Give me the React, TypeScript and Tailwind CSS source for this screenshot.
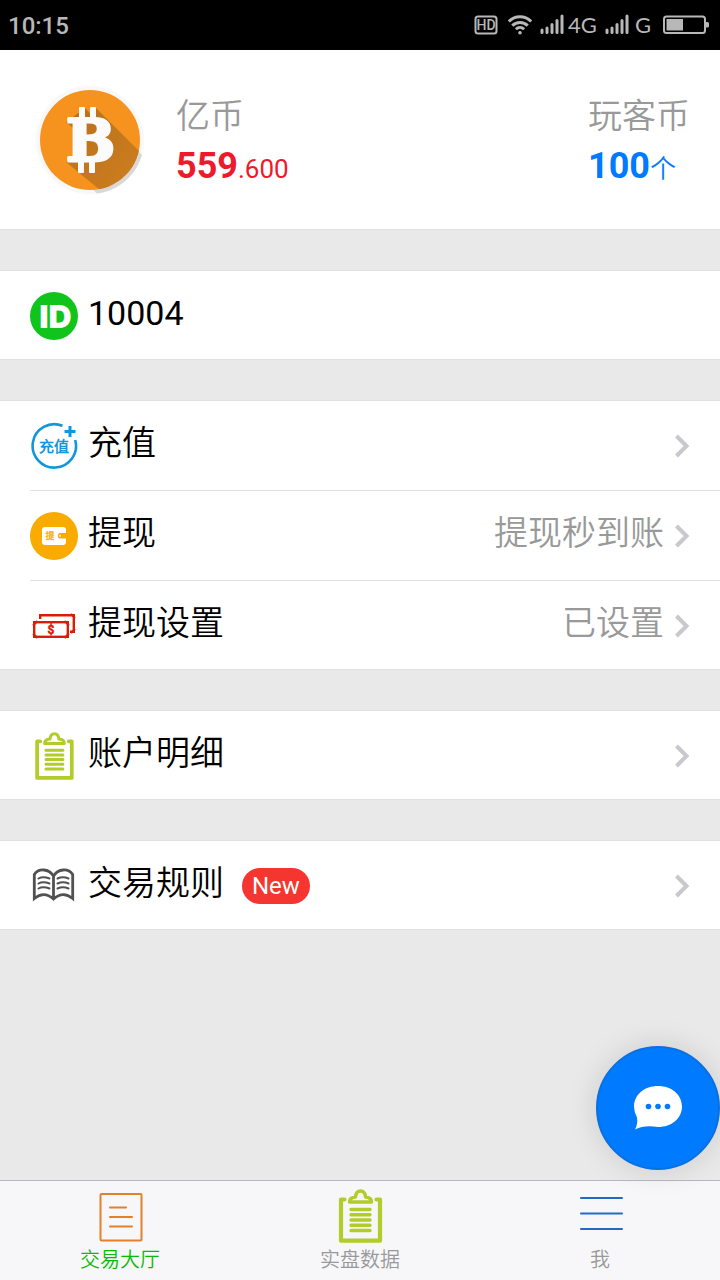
import type { ReactNode } from "react"

function SignalBars() {
  return (
    <svg width="24" height="22" viewBox="0 0 24 22" stroke="#b8b8b8" strokeWidth="3" strokeLinecap="round">
      <path d="M2 16V18.500M7 14V18.500M12 10.500V18.500M17 6.500V18.500M22 2V18.500" />
    </svg>
  )
}

function StatusBar() {
  return (
    <header className="flex h-[50px] items-center justify-between bg-black pl-2 pr-2.5 text-[#b8b8b8]">
      <time className="pt-0.5 text-[24px] font-medium leading-8">10:15</time>
      <div className="flex items-center">
        <svg width="24" height="20" viewBox="0 0 24 20" aria-label="HD">
          <rect x="1.500" y="1.500" width="21" height="17" rx="2.500" fill="none" stroke="#b8b8b8" strokeWidth="2" />
          <text x="12" y="15" fontSize="14" fontWeight="500" textAnchor="middle" fill="#b8b8b8">
            HD
          </text>
        </svg>
        <svg className="ml-2.5" width="24" height="20" viewBox="0 0 24 20" fill="none" stroke="#b8b8b8" strokeWidth="3">
          <path d="M.8 6.500C7 .2 17 .2 23.200 6.500M4.300 10.600C8.500 6.300 15.500 6.300 19.700 10.600M7.900 14.300C10.200 12 13.800 12 16.100 14.300" />
          <circle cx="12" cy="17.800" r="1.800" fill="#b8b8b8" stroke="none" />
        </svg>
        <div className="ml-2 flex items-center gap-1">
          <SignalBars />
          <span className="font-['Lato'] text-[22px] leading-6">4G</span>
        </div>
        <div className="ml-2 flex items-center gap-1.5">
          <SignalBars />
          <span className="font-['Lato'] text-[22px] leading-6">G</span>
        </div>
        <svg className="ml-3" width="47" height="20" viewBox="0 0 47 20">
          <rect x="1" y="1.500" width="41" height="16.500" rx="2.500" fill="none" stroke="#b8b8b8" strokeWidth="2" />
          <path d="M3.500 4H20V15.500H3.500ZM43 7H44.500Q46 7 46 8.500V11Q46 12.500 44.500 12.500H43Z" fill="#b8b8b8" />
        </svg>
      </div>
    </header>
  )
}

function BitcoinLogo() {
  return (
    <svg width="108" height="108" viewBox="0 0 108 108" aria-hidden="true">
      <defs>
        <clipPath id="coin">
          <circle cx="54" cy="54" r="50" />
        </clipPath>
        <clipPath id="rim">
          <circle cx="54" cy="54" r="54" />
        </clipPath>
        <linearGradient id="shade" x1="0" y1="0" x2="1" y2="1">
          <stop offset="0" stopColor="#b8701c" />
          <stop offset="1" stopColor="#d98520" />
        </linearGradient>
      </defs>
      <circle cx="54" cy="54" r="54" fill="#f8f8f8" />
      <path d="M94 57 112 75V112H65L52 98Z" fill="#d8d8d8" clipPath="url(#rim)" />
      <circle cx="54" cy="54" r="50" fill="#f6931f" />
      <g clipPath="url(#coin)">
        <path d="M49 22 54 27 60 22 142 104 110 142 30 76 42 74V46L30 36Z" fill="url(#shade)" />
      </g>
      <g fill="#fbfbfb">
        <rect x="43" y="21" width="6" height="14" rx="1" />
        <rect x="54" y="21" width="6" height="14" rx="1" />
        <rect x="42" y="74" width="6" height="13" rx="1" />
        <rect x="53" y="74" width="6" height="13" rx="1" />
        <text x="30" y="75" fontFamily="DejaVu Serif" fontSize="58" fontWeight="700" stroke="#fbfbfb" strokeWidth="3" strokeLinejoin="round">
          B
        </text>
      </g>
    </svg>
  )
}

function IdIcon() {
  return (
    <svg width="48" height="48" viewBox="0 0 48 48" aria-hidden="true">
      <circle cx="24" cy="24" r="24" fill="#11c41b" />
      <text x="25.500" y="36" textAnchor="middle" fontFamily="Inter" fontSize="32" fontWeight="900" fill="#fff">
        ID
      </text>
    </svg>
  )
}

function RechargeIcon() {
  return (
    <svg width="48" height="48" viewBox="0 0 48 48" aria-hidden="true">
      <path d="M32.500 3.800A21.700 21.700 0 1 0 45.200 18" fill="none" stroke="#1296db" strokeWidth="2.600" />
      <path d="M40 4V15M34.500 9.500H45.500" stroke="#1296db" strokeWidth="3" />
      <text x="24" y="29.500" textAnchor="middle" fontSize="15" fontWeight="700" fill="#1296db">
        充值
      </text>
    </svg>
  )
}

function WithdrawIcon() {
  return (
    <svg width="48" height="48" viewBox="0 0 48 48" aria-hidden="true">
      <circle cx="24" cy="24" r="24" fill="#f9ab00" />
      <path d="M15 15H33Q36 15 36 18V21H30.500A2.600 2.600 0 0 0 30.500 26.500H36V30Q36 33 33 33H15Q12 33 12 30V18Q12 15 15 15Z" fill="#fff" />
      <circle cx="30" cy="23.700" r="1" fill="#fff" />
      <text x="20" y="27" textAnchor="middle" fontSize="9" fontWeight="700" fill="#f9ab00">
        提
      </text>
    </svg>
  )
}

function CashIcon() {
  return (
    <svg width="48" height="48" viewBox="0 0 48 48" fill="none" stroke="#d81e06" strokeWidth="2.400" aria-hidden="true">
      <rect x="4.200" y="20.200" width="33.600" height="14.600" />
      <path d="M10.200 17V13.200H43.800V29.800H40" />
      <path d="M3 23.500 7.500 19M34.500 19 39 23.500M3 31.500 7.500 36M34.500 36 39 31.500M41 12 45 16M41 31 45 27" strokeWidth="2" />
      <text x="21" y="32" textAnchor="middle" fontSize="12" fontWeight="700" fill="#d81e06" strokeWidth=".5">
        $
      </text>
    </svg>
  )
}

function ClipboardIcon({ size }: { size: number }) {
  return (
    <svg width={size} height={size} viewBox="0 0 54 54" fill="none" stroke="#b2cc29" strokeWidth="4.200" strokeLinecap="round" strokeLinejoin="round" aria-hidden="true">
      <path d="M11.500 10.500H8V51.700H47V10.500H43.500" />
      <path d="M16.500 13Q16.500 8.500 22.500 8Q23 2 27.500 2T32.500 8Q38.500 8.500 38.500 13Z" strokeWidth="3.400" />
      <path d="M18 20.500H37M18 25.800H37M18 31H37M18 36.300H37M18 41.500H37" strokeWidth="3.400" />
    </svg>
  )
}

function BookIcon() {
  return (
    <svg width="48" height="48" viewBox="0 0 48 48" fill="none" stroke="#515151" aria-hidden="true">
      <path d="M23.500 14C19 6.500 8.500 6 4.300 12.500V36.500Q14 28.500 23.500 37Q33 28.500 42.700 36.500V12.500C38.500 6 28 6.500 23.500 14V37" strokeWidth="2.800" />
      <path d="M8.500 16.500Q13 14 19.500 16.500M8.500 21.500Q13 19 19.500 21.500M8.500 26.500Q13 24 19.500 26.500M27.500 16.500Q33 14 38.500 16.500M27.500 21.500Q33 19 38.500 21.500M27.500 26.500Q33 24 38.500 26.500" strokeWidth="2" strokeLinecap="round" />
    </svg>
  )
}

function Chevron() {
  return (
    <svg className="ml-2.5 shrink-0" width="16" height="24" viewBox="0 0 16 24" fill="none" stroke="#c8c8cd" strokeWidth="4" aria-hidden="true">
      <path d="M2.500 2 12.500 12 2.500 22" />
    </svg>
  )
}

function Group({ children }: { children: ReactNode }) {
  return <section className="border-y border-[#e0e0e0] bg-white">{children}</section>
}

type RowProps = {
  icon: ReactNode
  label: string
  value?: string
  badge?: string
  divider?: boolean
}

function Row({ icon, label, value, badge, divider }: RowProps) {
  return (
    <a href="#" className="block pl-[30px]">
      <div className={divider ? "flex h-[90px] items-center border-b border-[#e0e0e0] pr-[30px] pt-px" : "flex h-[88px] items-center pr-[30px] pt-px"}>
        <span className="mr-2.5 shrink-0">{icon}</span>
        <span className="pb-1.5 text-[34px] leading-[48px]">{label}</span>
        {badge && (
          <span className="ml-[18px] rounded-full bg-[#f43530] px-2.5 text-[24px] leading-9 text-white">{badge}</span>
        )}
        <span className="ml-auto pb-1.5 text-[34px] leading-[48px] text-[#999999]">{value}</span>
        <Chevron />
      </div>
    </a>
  )
}

function Tab({ icon, label, active }: { icon: ReactNode; label: string; active?: boolean }) {
  return (
    <a href="#" className="flex flex-1 flex-col items-center pt-2">
      {icon}
      <span className={active ? "text-[20px] leading-[34px] text-[#09bb07]" : "text-[20px] leading-[34px] text-[#999999]"}>{label}</span>
    </a>
  )
}

export default function App() {
  return (
    <div className="flex min-h-screen flex-col bg-[#e9e9e9] font-['Roboto','Noto_Sans_CJK_SC_DemiLight','Noto_Sans_CJK_SC_Light','Noto_Sans_CJK_SC',sans-serif] text-black">
      <StatusBar />

      <main className="flex flex-1 flex-col gap-10">
        <section className="flex h-[180px] items-center border-b border-[#e0e0e0] bg-white pl-9 pr-[30px]">
          <BitcoinLogo />
          <div className="ml-8 pt-1.5">
            <p className="text-[34px] leading-[50px] text-[#999999]">亿币</p>
            <p className="text-[26px] leading-[50px] text-[#ee1a2c]">
              <strong className="text-[36px]">559</strong>.600
            </p>
          </div>
          <div className="ml-auto pt-1.5">
            <p className="text-[34px] leading-[50px] text-[#999999]">玩客币</p>
            <p className="text-[26px] leading-[50px] text-[#007aff]">
              <strong className="text-[36px]">100</strong>个
            </p>
          </div>
        </section>

        <Group>
          <div className="flex h-[88px] items-center px-[30px] pt-px">
            <IdIcon />
            <span className="ml-2.5 pb-1.5 text-[34px] leading-[48px]">10004</span>
          </div>
        </Group>

        <Group>
          <Row icon={<RechargeIcon />} label="充值" divider />
          <Row icon={<WithdrawIcon />} label="提现" value="提现秒到账" divider />
          <Row icon={<CashIcon />} label="提现设置" value="已设置" />
        </Group>

        <Group>
          <Row icon={<ClipboardIcon size={48} />} label="账户明细" />
        </Group>

        <Group>
          <Row icon={<BookIcon />} label="交易规则" badge="New" />
        </Group>
      </main>

      <button
        type="button"
        aria-label="客服"
        className="fixed bottom-[110px] right-0 flex size-[124px] items-center justify-center rounded-full border-2 border-[#0a70e0] bg-[#007aff] shadow-[0_0_30px_rgba(0,0,0,0.13)]"
      >
        <svg width="48" height="44" viewBox="0 0 48 44">
          <path d="M24 0C37.500 0 48 8.500 48 20.500S37.500 41 24 41C15 39.500 8 40 1 43.500Q4 38 3 31.500Q0 26 0 20.500C0 8.500 10.500 0 24 0Z" fill="#fff" />
          <g fill="#007aff">
            <circle cx="14.500" cy="20.500" r="2.800" />
            <circle cx="24" cy="20.500" r="2.800" />
            <circle cx="33.500" cy="20.500" r="2.800" />
          </g>
        </svg>
      </button>

      <nav className="flex h-[100px] border-t border-[#b8b8bb] bg-[#f7f7fa]">
        <Tab
          active
          label="交易大厅"
          icon={
            <svg width="54" height="54" viewBox="0 0 54 54" fill="none" stroke="#e2802b" strokeWidth="2" strokeLinecap="round" aria-hidden="true">
              <rect x="7.500" y="5" width="41" height="46.500" rx="1" />
              <path d="M17 18.500H33M17 28H39M17 37.500H39" />
            </svg>
          }
        />
        <Tab label="实盘数据" icon={<ClipboardIcon size={54} />} />
        <Tab
          label="我"
          icon={
            <svg width="54" height="54" viewBox="0 0 54 54" stroke="#2468c8" strokeWidth="2" strokeLinecap="round" aria-hidden="true">
              <path d="M8 9H49M8 24.500H49M8 40H49" />
            </svg>
          }
        />
      </nav>
    </div>
  )
}
